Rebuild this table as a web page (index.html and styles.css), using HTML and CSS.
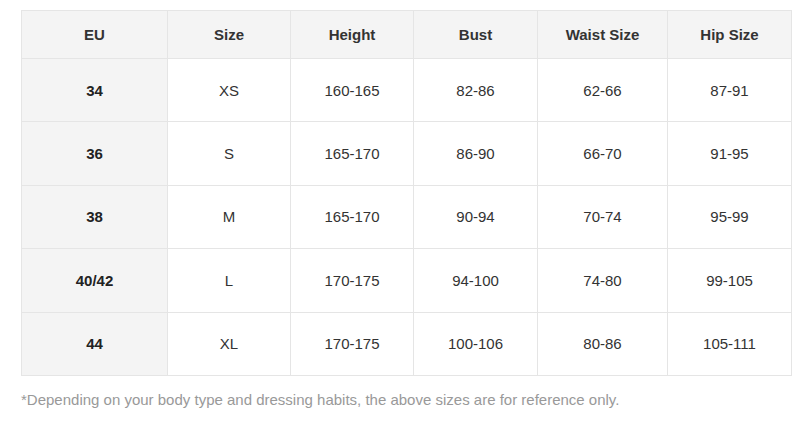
FILE: index.html
```html
<!DOCTYPE html>
<html>
<head>
<meta charset="utf-8">
<link rel="stylesheet" href="styles.css">
</head>
<body>
<div class="wrap">
  <table class="size-table">
    <colgroup>
      <col class="c1"><col class="c2"><col class="c3"><col class="c4"><col class="c5"><col class="c6">
    </colgroup>
    <thead>
      <tr><th>EU</th><th>Size</th><th>Height</th><th>Bust</th><th>Waist Size</th><th>Hip Size</th></tr>
    </thead>
    <tbody>
      <tr><td class="eu">34</td><td>XS</td><td>160-165</td><td>82-86</td><td>62-66</td><td>87-91</td></tr>
      <tr><td class="eu">36</td><td>S</td><td>165-170</td><td>86-90</td><td>66-70</td><td>91-95</td></tr>
      <tr><td class="eu">38</td><td>M</td><td>165-170</td><td>90-94</td><td>70-74</td><td>95-99</td></tr>
      <tr><td class="eu">40/42</td><td>L</td><td>170-175</td><td>94-100</td><td>74-80</td><td>99-105</td></tr>
      <tr><td class="eu">44</td><td>XL</td><td>170-175</td><td>100-106</td><td>80-86</td><td>105-111</td></tr>
    </tbody>
  </table>
  <p class="note">*Depending on your body type and dressing habits, the above sizes are for reference only.</p>
</div>
</body>
</html>
```
FILE: styles.css
```css
html, body { margin: 0; padding: 0; background: #fff; }
body { font-family: "Liberation Sans", Arial, sans-serif; color: #333; }
.wrap { padding: 10px 0 0 21px; }
.size-table {
  border-collapse: collapse;
  table-layout: fixed;
  width: 770px;
  font-size: 15px;
}
.c1 { width: 146px; }
.c2 { width: 123px; }
.c3 { width: 123px; }
.c4 { width: 124px; }
.c5 { width: 130px; }
.c6 { width: 124px; }
.size-table th, .size-table td {
  border: 1px solid #e5e5e5;
  text-align: center;
  vertical-align: middle;
  padding: 0;
}
.size-table th {
  background: #f4f4f4;
  font-weight: bold;
  height: 47px;
  color: #333;
}
.size-table td { height: 62.4px; color: #333; }
.size-table td.eu { background: #f4f4f4; font-weight: bold; color: #222; }
.note {
  margin: 15px 0 0 0;
  font-size: 15px;
  color: #999;
}
```
